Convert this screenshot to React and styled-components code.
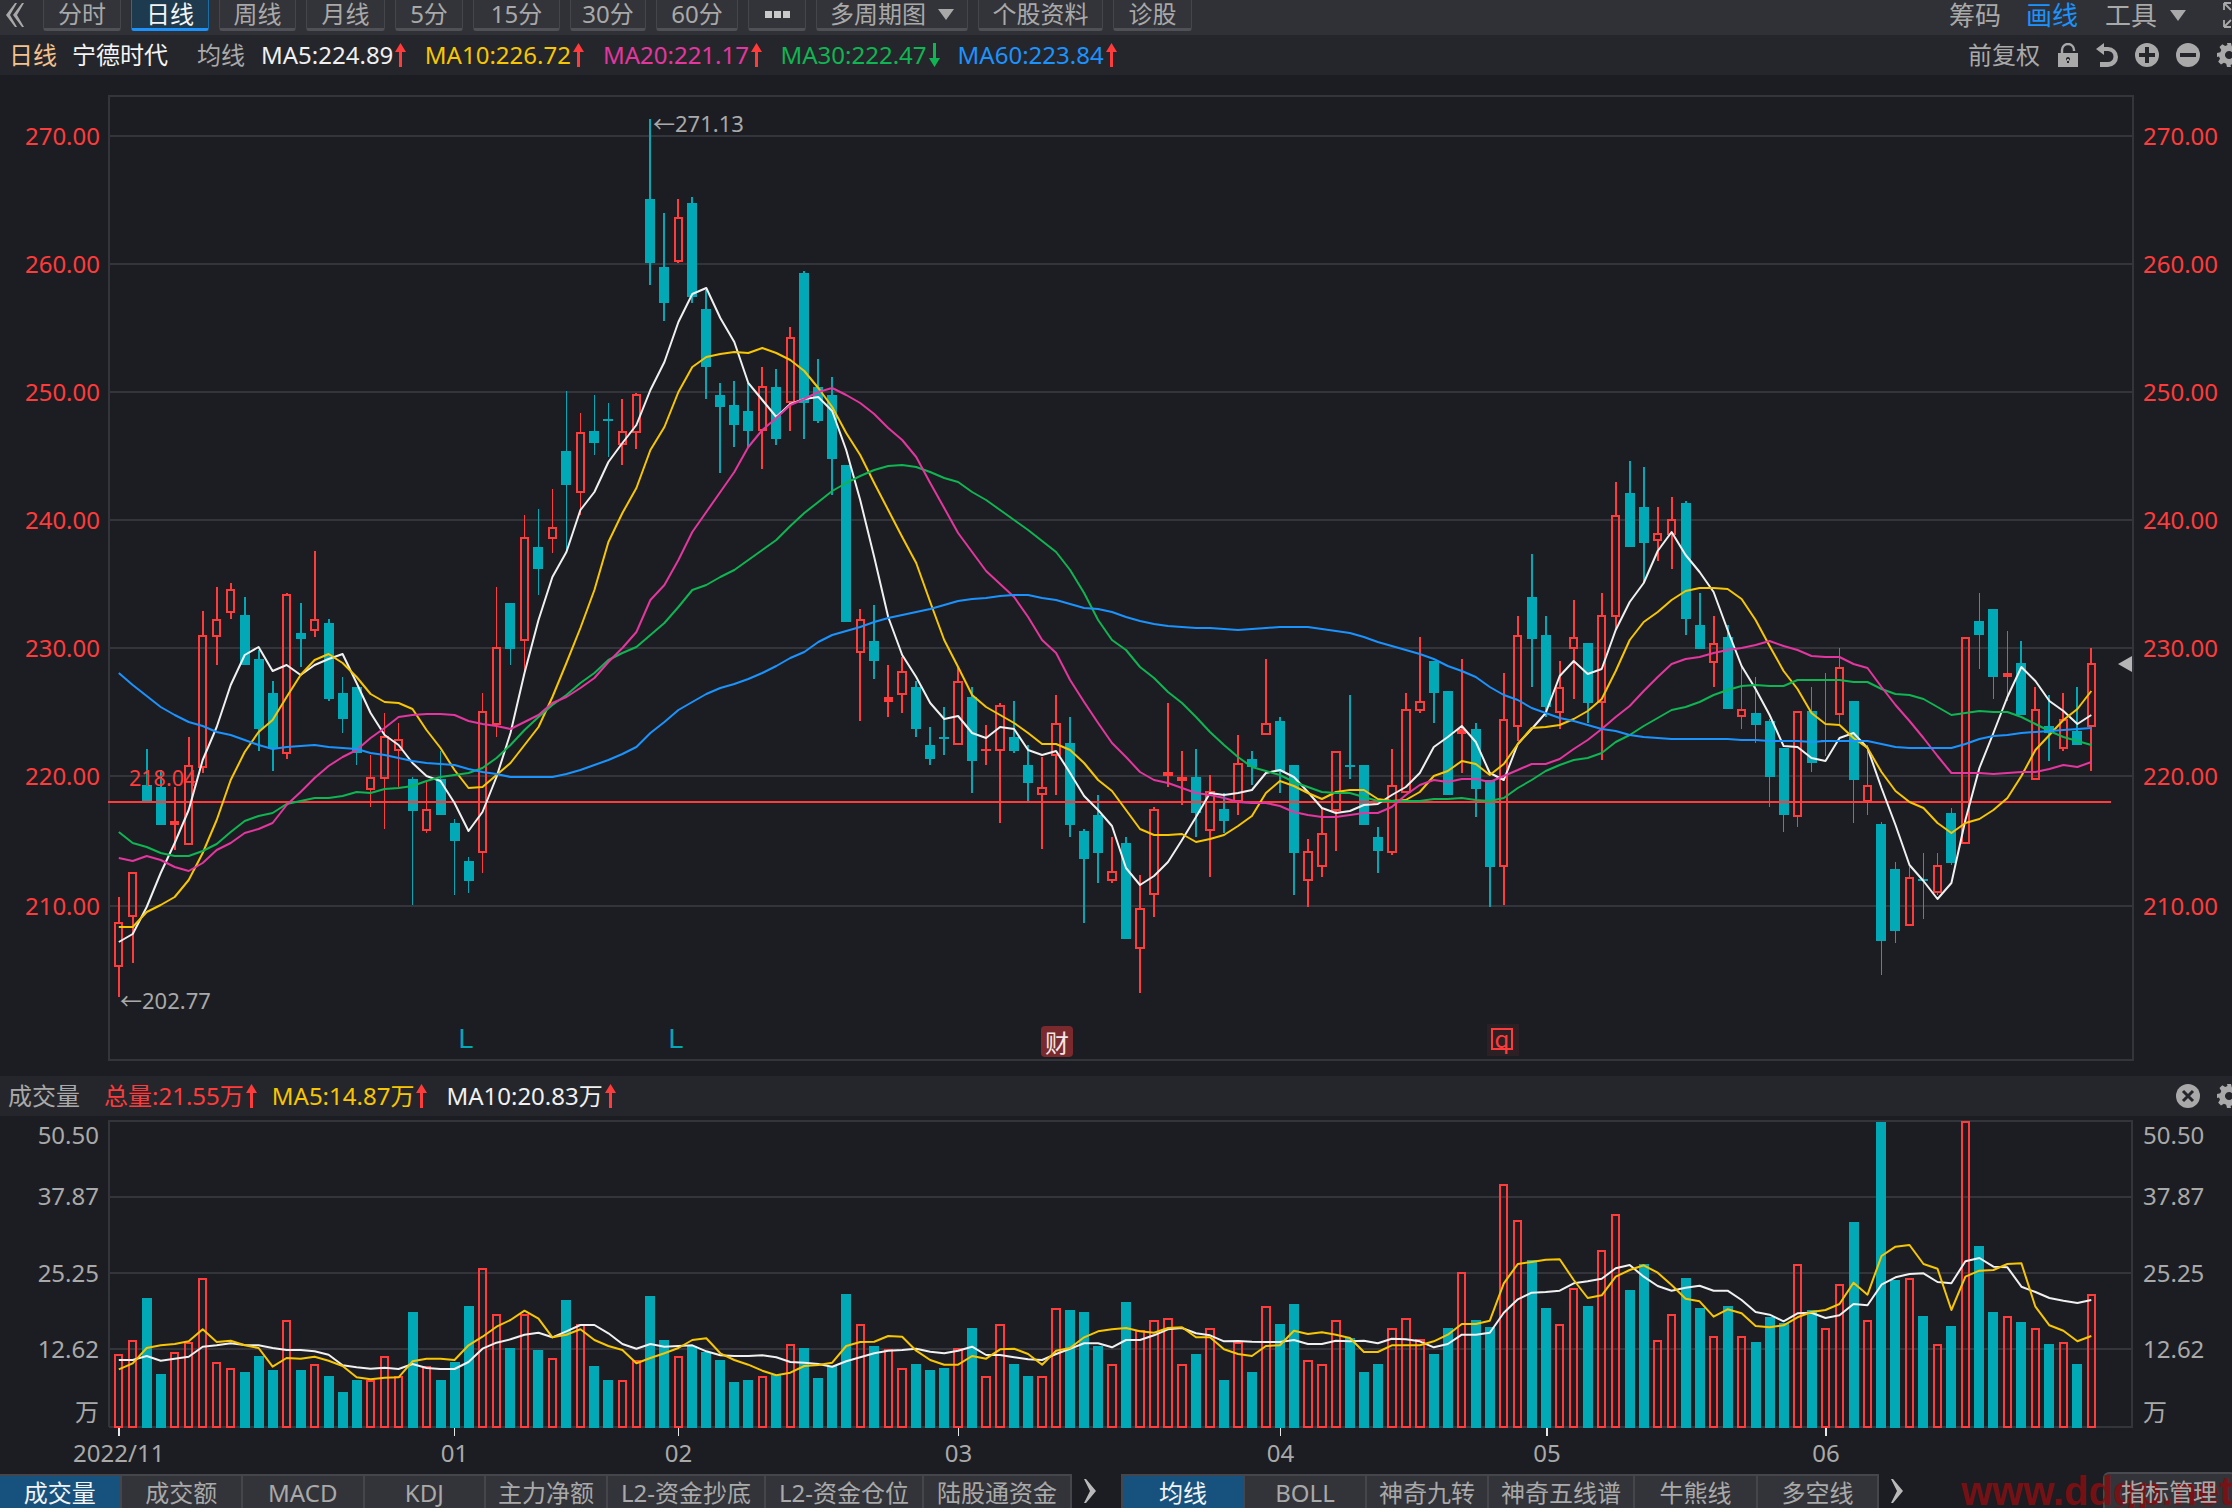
import React, { useMemo } from 'react';
import styled, { createGlobalStyle } from 'styled-components';

const RED = '#ff3b3b';
const TEAL = '#00a9b5';
const YELLOW = '#f7c600';
const PINK = '#e3369f';
const GREEN = '#0fb552';
const BLUE = '#1b93ff';
const WHITE = '#f0f0f0';
const GRAY = '#a9a9a9';
const GRID = '#34353a';

const X0 = 118.75;
const STEP = 13.99;
const xAt = (i) => X0 + STEP * i;

// u = red hollow, d = teal solid: [kind, high, bodyTop, bodyBottom, low] in page pixels
const CANDLES = [
  ['u', 897, 923, 966, 997], ['u', 873, 873, 916, 963], ['d', 749, 785, 801, 801], ['d', 770, 787, 825, 825],
  ['u', 787, 821, 825, 850], ['u', 737, 766, 844, 844], ['u', 611, 636, 767, 773], ['u', 587, 620, 636, 665],
  ['u', 583, 590, 612, 619], ['d', 597, 615, 665, 665], ['d', 650, 659, 729, 751], ['d', 681, 693, 749, 771],
  ['u', 593, 595, 753, 759], ['d', 603, 633, 639, 667], ['u', 551, 620, 630, 637], ['d', 619, 623, 699, 701],
  ['d', 677, 693, 719, 733], ['d', 687, 687, 753, 765], ['u', 755, 778, 789, 807], ['u', 713, 737, 778, 829],
  ['u', 723, 740, 750, 787], ['d', 777, 779, 811, 905], ['u', 780, 810, 830, 833], ['d', 751, 779, 815, 815],
  ['d', 819, 823, 841, 895], ['d', 857, 861, 881, 893], ['u', 693, 712, 852, 873], ['u', 587, 648, 724, 737],
  ['d', 603, 603, 649, 665], ['u', 515, 538, 640, 671], ['d', 509, 547, 569, 595], ['u', 489, 528, 538, 553],
  ['d', 391, 451, 485, 550], ['u', 413, 433, 492, 515], ['d', 395, 431, 443, 455], ['d', 403, 419, 421, 457],
  ['u', 399, 432, 444, 465], ['u', 393, 395, 432, 449], ['d', 119, 199, 263, 285], ['d', 213, 267, 303, 321],
  ['u', 199, 218, 261, 263], ['d', 197, 203, 297, 303], ['d', 290, 309, 367, 399], ['d', 383, 395, 407, 473],
  ['d', 381, 405, 425, 447], ['d', 383, 411, 431, 447], ['u', 367, 387, 430, 469], ['d', 369, 387, 439, 445],
  ['u', 327, 338, 402, 431], ['d', 271, 273, 403, 439], ['d', 359, 387, 421, 423], ['d', 377, 395, 459, 495],
  ['d', 465, 465, 622, 622], ['u', 609, 620, 652, 721], ['d', 605, 641, 661, 679], ['u', 665, 697, 702, 717],
  ['u', 657, 672, 694, 713], ['d', 681, 687, 729, 737], ['d', 727, 745, 759, 765], ['d', 707, 737, 739, 755],
  ['u', 667, 682, 744, 744], ['d', 687, 697, 761, 793], ['u', 725, 749, 751, 765], ['u', 703, 706, 750, 823],
  ['d', 701, 737, 751, 753], ['d', 745, 765, 783, 801], ['u', 757, 788, 794, 849], ['u', 695, 724, 755, 795],
  ['d', 717, 743, 825, 837], ['d', 829, 831, 859, 923], ['d', 795, 815, 853, 883], ['u', 837, 872, 880, 883],
  ['d', 837, 843, 939, 939], ['u', 875, 909, 948, 993], ['u', 807, 810, 894, 917], ['u', 703, 772, 776, 787],
  ['u', 751, 777, 781, 805], ['d', 749, 777, 813, 837], ['u', 775, 792, 830, 877], ['d', 793, 809, 821, 833],
  ['u', 735, 764, 801, 815], ['d', 751, 759, 767, 785], ['u', 659, 724, 734, 734], ['d', 717, 721, 772, 793],
  ['d', 765, 765, 853, 895], ['u', 839, 852, 880, 907], ['u', 809, 834, 866, 877], ['u', 752, 752, 810, 851],
  ['d', 695, 765, 767, 779], ['d', 765, 765, 825, 825], ['d', 827, 837, 851, 873], ['u', 749, 786, 852, 855],
  ['u', 693, 710, 792, 792], ['u', 637, 702, 710, 713], ['d', 661, 661, 693, 723], ['d', 691, 691, 795, 795],
  ['u', 659, 729, 734, 773], ['d', 723, 729, 789, 817], ['d', 780, 780, 867, 907], ['u', 673, 720, 866, 905],
  ['u', 616, 636, 726, 741], ['d', 554, 597, 639, 687], ['d', 616, 635, 707, 717], ['u', 661, 688, 712, 729],
  ['u', 600, 638, 648, 699], ['d', 643, 643, 703, 723], ['u', 593, 616, 702, 760], ['u', 482, 516, 616, 630],
  ['d', 461, 493, 547, 547], ['d', 467, 507, 543, 582], ['u', 507, 534, 540, 561], ['u', 497, 520, 534, 569],
  ['d', 501, 503, 619, 635], ['d', 593, 625, 649, 649], ['u', 616, 644, 662, 687], ['d', 625, 637, 709, 709],
  ['u', 665, 710, 716, 729], ['d', 677, 713, 725, 743], ['d', 719, 721, 777, 807], ['d', 748, 748, 815, 832],
  ['u', 712, 712, 816, 827], ['d', 687, 711, 763, 772], ['u', 673, 740, 741, 756], ['u', 648, 668, 714, 726],
  ['d', 701, 701, 780, 823], ['u', 745, 786, 801, 815], ['d', 822, 824, 941, 975], ['d', 862, 869, 931, 943],
  ['u', 867, 878, 925, 925], ['d', 853, 879, 881, 919], ['u', 853, 866, 892, 895], ['d', 808, 813, 863, 865],
  ['u', 638, 638, 843, 843], ['d', 593, 621, 635, 669], ['d', 609, 609, 677, 699], ['u', 631, 673, 677, 701],
  ['d', 641, 663, 715, 715], ['u', 687, 710, 779, 779], ['d', 695, 726, 733, 761], ['u', 693, 720, 748, 751],
  ['d', 687, 731, 745, 745], ['u', 648, 664, 726, 771],
];

const MA5 = [942, 934, 907, 873, 843, 810, 760, 727, 685, 655, 647, 671, 665, 675, 665, 659, 654, 683, 713, 735, 745, 763, 776, 781, 803, 831, 812, 777, 733, 673, 620, 577, 552, 510, 492, 462, 443, 425, 390, 362, 322, 294, 288, 318, 342, 383, 400, 417, 404, 399, 397, 411, 450, 500, 557, 617, 655, 677, 703, 719, 716, 733, 738, 727, 729, 750, 755, 751, 773, 796, 810, 826, 868, 885, 876, 862, 840, 817, 793, 795, 793, 790, 773, 770, 777, 792, 808, 813, 811, 805, 804, 795, 787, 773, 747, 737, 726, 742, 773, 780, 744, 729, 713, 676, 661, 674, 669, 630, 602, 583, 551, 532, 555, 572, 592, 630, 666, 689, 715, 746, 747, 758, 761, 738, 733, 748, 788, 825, 865, 881, 899, 883, 820, 768, 733, 697, 667, 681, 701, 711, 724, 715];
const MA10 = [927, 927, 912, 905, 897, 880, 853, 820, 780, 752, 732, 720, 697, 675, 660, 654, 663, 677, 694, 702, 703, 709, 730, 748, 770, 788, 787, 775, 763, 745, 727, 697, 663, 628, 590, 542, 513, 488, 450, 427, 392, 367, 357, 354, 352, 353, 348, 353, 360, 371, 388, 407, 433, 455, 483, 510, 537, 563, 602, 640, 667, 695, 707, 715, 723, 733, 744, 744, 750, 763, 780, 791, 810, 829, 835, 835, 834, 842, 839, 835, 826, 816, 793, 781, 786, 793, 799, 792, 790, 790, 799, 801, 800, 792, 776, 771, 761, 764, 775, 764, 744, 728, 727, 725, 719, 711, 699, 671, 640, 622, 612, 600, 591, 588, 588, 589, 599, 620, 646, 671, 689, 713, 724, 725, 738, 748, 772, 791, 802, 808, 823, 833, 823, 819, 810, 798, 776, 750, 735, 720, 709, 691];
const MA20 = [858, 861, 856, 860, 867, 871, 863, 850, 843, 833, 829, 823, 805, 792, 778, 766, 757, 750, 738, 728, 717, 715, 714, 714, 715, 721, 724, 726, 729, 722, 715, 703, 697, 688, 678, 662, 648, 632, 600, 585, 560, 532, 512, 492, 472, 447, 430, 418, 405, 399, 392, 388, 395, 403, 414, 428, 440, 457, 483, 508, 533, 552, 571, 584, 597, 617, 640, 653, 680, 702, 723, 743, 757, 772, 780, 783, 788, 793, 795, 798, 802, 803, 803, 806, 812, 815, 817, 817, 815, 813, 813, 807, 795, 785, 780, 782, 779, 779, 782, 776, 770, 764, 764, 759, 749, 740, 729, 717, 706, 691, 677, 664, 659, 657, 653, 650, 648, 645, 641, 646, 650, 656, 657, 657, 664, 668, 687, 705, 721, 738, 756, 773, 773, 773, 774, 773, 772, 772, 769, 765, 767, 762];
const MA30 = [832, 843, 847, 853, 856, 856, 851, 844, 832, 821, 816, 813, 804, 801, 798, 798, 796, 792, 793, 789, 788, 786, 781, 777, 775, 773, 768, 758, 745, 730, 717, 705, 695, 683, 673, 660, 653, 647, 635, 623, 607, 590, 585, 577, 570, 560, 550, 540, 526, 513, 502, 491, 483, 476, 470, 466, 465, 467, 472, 478, 482, 492, 500, 510, 520, 530, 541, 552, 570, 593, 620, 640, 650, 667, 678, 692, 703, 717, 732, 745, 757, 767, 771, 775, 782, 787, 792, 793, 793, 797, 801, 801, 801, 801, 799, 799, 798, 800, 801, 798, 788, 780, 771, 765, 760, 758, 753, 742, 735, 726, 718, 710, 707, 702, 695, 690, 686, 685, 686, 686, 680, 680, 680, 680, 682, 682, 689, 694, 695, 699, 707, 715, 713, 711, 712, 712, 717, 724, 731, 737, 741, 745];
const MA60 = [673, 685, 696, 707, 715, 722, 726, 732, 735, 740, 745, 749, 747, 746, 745, 747, 748, 749, 753, 755, 758, 761, 763, 764, 765, 769, 772, 774, 777, 777, 777, 777, 774, 770, 765, 760, 754, 747, 733, 722, 710, 702, 694, 688, 684, 679, 673, 666, 658, 652, 642, 635, 631, 627, 622, 618, 615, 612, 609, 605, 601, 599, 598, 596, 595, 595, 598, 600, 604, 608, 609, 612, 617, 621, 624, 626, 627, 628, 628, 629, 630, 629, 628, 627, 627, 627, 629, 631, 633, 637, 642, 646, 650, 654, 659, 666, 671, 677, 687, 695, 700, 708, 713, 718, 721, 725, 729, 731, 735, 737, 738, 739, 739, 739, 739, 739, 740, 740, 741, 741, 741, 742, 741, 741, 741, 741, 744, 747, 748, 748, 748, 748, 744, 739, 736, 735, 733, 732, 731, 730, 729, 728];

// bar tops, stored as offset*3 from y=1120
const VOL_TOPS = [704, 662, 534, 762, 698, 668, 476, 728, 746, 756, 708, 750, 602, 750, 734, 768, 816, 780, 782, 710, 770, 576, 740, 780, 726, 558, 446, 584, 684, 584, 690, 716, 540, 614, 738, 780, 782, 724, 528, 660, 710, 678, 696, 720, 786, 780, 770, 766, 674, 684, 774, 738, 522, 614, 678, 690, 746, 732, 750, 744, 686, 624, 770, 614, 732, 768, 770, 566, 570, 576, 678, 734, 546, 632, 602, 596, 734, 702, 626, 780, 668, 756, 560, 612, 552, 722, 734, 602, 654, 756, 732, 626, 596, 660, 702, 624, 458, 600, 620, 194, 302, 420, 564, 614, 506, 558, 392, 284, 510, 432, 662, 584, 474, 564, 650, 558, 650, 666, 590, 610, 434, 570, 626, 494, 306, 602, 6, 480, 476, 588, 674, 618, 0, 378, 576, 590, 606, 626, 672, 668, 732, 524];
const VOL_MA5 = [748, 730, 684, 676, 672, 664, 628, 666, 662, 676, 684, 740, 714, 716, 710, 722, 738, 772, 778, 773, 772, 724, 716, 716, 720, 676, 650, 620, 600, 572, 596, 652, 644, 628, 660, 678, 690, 730, 714, 700, 684, 660, 655, 700, 720, 734, 752, 766, 758, 738, 735, 728, 678, 666, 665, 648, 650, 692, 720, 734, 734, 708, 716, 688, 686, 702, 734, 692, 684, 652, 634, 628, 624, 634, 638, 624, 622, 652, 652, 688, 702, 708, 678, 676, 632, 642, 637, 644, 654, 696, 696, 676, 676, 676, 664, 644, 612, 612, 602, 490, 432, 426, 419, 418, 480, 534, 526, 470, 450, 436, 458, 495, 536, 544, 590, 568, 580, 618, 622, 616, 592, 576, 570, 552, 488, 524, 408, 380, 375, 432, 446, 570, 470, 452, 450, 432, 430, 560, 616, 632, 664, 648];
const VOL_MA10 = [720, 720, 708, 722, 716, 710, 680, 676, 670, 675, 676, 684, 690, 690, 694, 704, 736, 742, 746, 743, 747, 732, 744, 747, 747, 726, 686, 668, 658, 644, 638, 652, 634, 615, 615, 640, 672, 686, 672, 680, 678, 676, 694, 706, 708, 708, 706, 712, 726, 728, 732, 740, 724, 712, 700, 692, 690, 686, 695, 700, 692, 680, 705, 705, 712, 718, 720, 702, 686, 670, 670, 682, 660, 660, 646, 628, 624, 640, 646, 664, 663, 665, 666, 666, 660, 672, 672, 662, 664, 662, 670, 656, 658, 664, 682, 672, 644, 644, 638, 578, 538, 518, 516, 512, 490, 484, 476, 445, 435, 470, 498, 512, 503, 497, 512, 512, 540, 576, 584, 604, 580, 578, 594, 586, 552, 556, 494, 472, 462, 460, 486, 490, 424, 414, 440, 442, 500, 516, 534, 542, 549, 540];

const PRICE_GRID = [
  ['270.00', 135.7], ['260.00', 263.7], ['250.00', 391.7], ['240.00', 519.7],
  ['230.00', 647.7], ['220.00', 775.7], ['210.00', 905.7],
];
const VOL_GRID = [
  ['37.87', 1196.7], ['25.25', 1272.7], ['12.62', 1348.7],
];
const VOL_LABELS = [
  ['50.50', 1134.5], ['37.87', 1195.5], ['25.25', 1272.5], ['12.62', 1348.5], ['万', 1411.5],
];
const X_TICKS = [
  ['2022/11', 118.75], ['01', 454.5], ['02', 678.5], ['03', 958.5],
  ['04', 1280.5], ['05', 1547], ['06', 1826],
];

const PERIODS = [
  { label: '分时', w: 78 }, { label: '日线', w: 78, active: true }, { label: '周线', w: 77 }, { label: '月线', w: 79 },
  { label: '5分', w: 68 }, { label: '15分', w: 87 }, { label: '30分', w: 76 }, { label: '60分', w: 82 },
];

const INDICATORS = [
  { label: '成交量', w: 121.5, active: true }, { label: '成交额', w: 121.5 }, { label: 'MACD', w: 121.5 },
  { label: 'KDJ', w: 121.5 }, { label: '主力净额', w: 122 }, { label: 'L2-资金抄底', w: 158 },
  { label: 'L2-资金仓位', w: 158 }, { label: '陆股通资金', w: 148 },
];
const OVERLAYS = [
  { label: '均线', w: 122, active: true }, { label: 'BOLL', w: 122 }, { label: '神奇九转', w: 122 },
  { label: '神奇五线谱', w: 146 }, { label: '牛熊线', w: 123 }, { label: '多空线', w: 121 },
];

const GlobalStyle = createGlobalStyle`
  html, body {
    margin: 0;
    padding: 0;
    background: #1c1d22;
  }
  body {
    font-family: "Noto Sans", "Noto Sans CJK SC", sans-serif;
  }
`;

const Page = styled.div`
  position: relative;
  width: 2232px;
  height: 1508px;
  overflow: hidden;
  display: flex;
  flex-direction: column;
  background: #1c1d22;
  color: ${GRAY};
  font-size: 24px;
  line-height: 1;
`;

const Toolbar = styled.div`
  height: 35px;
  flex: none;
  display: flex;
  align-items: flex-start;
  gap: 10px;
  background: #303136;
  padding-left: 6px;
`;

const BackMark = styled.span`
  width: 27px;
  height: 30px;
  display: flex;
  align-items: center;
  color: ${GRAY};
`;

const ToolButton = styled.div`
  width: ${({ $w }) => $w}px;
  height: 31px;
  box-sizing: border-box;
  flex: none;
  display: flex;
  align-items: center;
  justify-content: center;
  gap: 12px;
  border: 1px solid ${({ $active }) => ($active ? '#1c6ea8' : '#45464c')};
  border-top: 0;
  border-bottom: ${({ $active }) => ($active ? '3px solid #1b93ff' : '3px solid #505156')};
  border-radius: 0 0 3px 3px;
  background: ${({ $active }) => ($active ? '#1d3a4f' : '#33343a')};
  color: ${({ $active }) => ($active ? '#f4f4f4' : GRAY)};
`;

const Caret = styled.i`
  width: 0;
  height: 0;
  border-left: 8px solid transparent;
  border-right: 8px solid transparent;
  border-top: 11px solid ${GRAY};
`;

const ToolLinks = styled.div`
  margin-left: auto;
  margin-right: -10px;
  height: 30px;
  display: flex;
  align-items: center;
  font-size: 26px;
`;

const ToolLink = styled.span`
  color: ${({ $active }) => ($active ? BLUE : GRAY)};
  margin-right: ${({ $mr }) => $mr}px;
`;

const LegendBar = styled.div`
  height: 40px;
  flex: none;
  display: flex;
  align-items: center;
  background: #25262b;
  padding-left: ${({ $pl }) => $pl}px;
`;

const LegendName = styled.span`
  color: ${({ $color }) => $color};
  margin-right: ${({ $mr }) => $mr}px;
  white-space: nowrap;
`;

const Readout = styled.span`
  display: flex;
  align-items: center;
  gap: 2px;
  color: ${({ $color }) => $color};
  margin-right: ${({ $mr }) => $mr ?? 18}px;
  white-space: nowrap;
`;

const LegendTools = styled.div`
  margin-left: auto;
  display: flex;
  align-items: center;
  gap: 17px;
  margin-right: -9px;
  flex: none;
`;

const PlainLabel = styled.span`
  color: ${GRAY};
  margin-right: 1px;
`;

const ChartSvg = styled.svg`
  display: block;
  flex: none;
  width: 2232px;
  height: ${({ $h }) => $h}px;
`;

const AxisText = styled.text`
  font-family: "Noto Sans", "Noto Sans CJK SC", sans-serif;
  font-size: ${({ $size }) => $size || 24}px;
  fill: ${({ $color }) => $color || GRAY};
  dominant-baseline: central;
`;

const SignalText = styled.text`
  font-family: "Liberation Sans", "Noto Sans", sans-serif;
  font-size: 27px;
  fill: ${TEAL};
  dominant-baseline: central;
  text-anchor: middle;
`;

const BadgeText = styled.text`
  font-family: "Noto Sans CJK SC", sans-serif;
  font-size: 24px;
  fill: ${({ $color }) => $color};
  dominant-baseline: central;
  text-anchor: middle;
`;

const TabRow = styled.div`
  position: relative;
  height: 34px;
  flex: none;
  display: flex;
  align-items: stretch;
`;

const TabGroup = styled.div`
  display: flex;
  border-top: 2px solid #45464c;
  border-left: ${({ $edge }) => ($edge ? '2px solid #45464c' : '0')};
  margin-left: ${({ $ml }) => $ml || 0}px;
  background: #33343a;
`;

const Tab = styled.div`
  width: ${({ $w }) => $w}px;
  box-sizing: border-box;
  padding-top: 2px;
  display: flex;
  align-items: center;
  justify-content: center;
  border-right: 2px solid #45464c;
  white-space: nowrap;
  background: ${({ $active }) => ($active ? '#17527f' : 'transparent')};
  color: ${({ $active }) => ($active ? '#f2f2f2' : GRAY)};
`;

const Chevron = styled.svg`
  width: 14px;
  height: 24px;
  align-self: center;
  flex: none;
  margin-left: ${({ $ml }) => $ml}px;
`;

const ManageButton = styled.div`
  position: absolute;
  right: -4px;
  bottom: 0;
  width: 133px;
  height: 36px;
  box-sizing: border-box;
  border: 2px solid #4a4b51;
  border-bottom: 0;
  border-radius: 6px 6px 0 0;
  background: #33343a;
`;

const ManageLabel = styled.span`
  position: absolute;
  left: 2121px;
  top: 6px;
  z-index: 3;
  color: ${GRAY};
  white-space: nowrap;
`;

const Watermark = styled.span`
  position: absolute;
  left: 1961px;
  top: -6px;
  z-index: 2;
  font-family: "Liberation Sans", sans-serif;
  font-size: 40px;
  font-weight: 700;
  line-height: 46px;
  color: #7d1113;
  opacity: 0.92;
  white-space: nowrap;
`;

function Arrow({ color, down }) {
  return (
    <svg width="11" height="24" viewBox="0 0 11 24">
      <path d={down ? 'M4 0h3v15h4l-5.500 9L0 15h4z' : 'M5.500 0L11 9H7v15H4V9H0z'} fill={color} />
    </svg>
  );
}

function LockIcon() {
  return (
    <svg width="20" height="24" viewBox="0 0 20 24">
      <path d="M4 11V7a6 6 0 0 1 12 0v1" fill="none" stroke={GRAY} strokeWidth="2.400" />
      <path d="M0 10h20v14H0z M10 14a2 2 0 1 0 .01 0z M9 16h2v4H9z" fill={GRAY} fillRule="evenodd" />
    </svg>
  );
}

function UndoIcon() {
  return (
    <svg width="23" height="24" viewBox="0 0 23 24">
      <path d="M9 0L1 6l8 6V8h4a5 5 0 0 1 0 11H5v5h8a10 10 0 0 0 0-20H9z" fill={GRAY} />
    </svg>
  );
}

function ZoomIcon({ plus }) {
  return (
    <svg width="24" height="24" viewBox="0 0 24 24">
      <circle cx="12" cy="12" r="12" fill={GRAY} />
      <path d={plus ? 'M10 4h4v6h6v4h-6v6h-4v-6H4v-4h6z' : 'M4 10h16v4H4z'} fill="#25262b" />
    </svg>
  );
}

function GearIcon() {
  return (
    <svg width="24" height="24" viewBox="0 0 24 24">
      <path
        d="M10 0h4l.8 3.300 2.300 1 2.900-1.800 2.800 2.800-1.800 2.900 1 2.300L24 10v4l-3.300.8-1 2.300 1.800 2.900-2.800 2.800-2.900-1.800-2.300 1L14 24h-4l-.8-3.300-2.300-1-2.900 1.800-2.800-2.800 1.800-2.900-1-2.300L0 14v-4l3.300-.8 1-2.300L2.500 4l2.800-2.800 2.900 1.800 2.300-1zM12 8a4 4 0 1 0 .01 0z"
        fill={GRAY}
        fillRule="evenodd"
      />
    </svg>
  );
}

function CloseIcon() {
  return (
    <svg width="24" height="24" viewBox="0 0 24 24">
      <circle cx="12" cy="12" r="12" fill={GRAY} />
      <path d="M7 7l10 10M17 7L7 17" stroke="#25262b" strokeWidth="3" />
    </svg>
  );
}

function ExpandIcon() {
  return (
    <svg width="20" height="28" viewBox="0 0 20 28">
      <path d="M2 2h7M2 2v7M2 2l7 7M2 26h7M2 26v-7M2 26l7-7" fill="none" stroke={GRAY} strokeWidth="1.800" />
    </svg>
  );
}

function DotsIcon() {
  return (
    <svg width="25" height="7" viewBox="0 0 25 7">
      <path d="M0 0h7v7H0zM9 0h7v7H9zM18 0h7v7h-7z" fill="#c9c9c9" />
    </svg>
  );
}

function ChevronRight() {
  return <path d="M2 0l10 12L2 24h-2l6-12L0 0z" fill="#b9b9b9" />;
}

function Candle({ data, i }) {
  const [kind, high, top, bottom, low] = data;
  const x = xAt(i);
  const solidRed = kind === 'u' && bottom - top <= 5;
  if (kind === 'd') {
    return (
      <g fill={TEAL}>
        <rect x={x - 0.9} y={high} width="1.800" height={low - high} />
        <rect x={x - 5} y={top} width="10" height={Math.max(bottom - top, 2)} />
      </g>
    );
  }
  return (
    <g>
      <rect x={x - 0.9} y={high} width="1.800" height={top - high} fill={RED} />
      <rect x={x - 0.9} y={bottom} width="1.800" height={low - bottom} fill={RED} />
      {solidRed ? (
        <rect x={x - 4.7} y={top} width="9.400" height={bottom - top} fill={RED} />
      ) : (
        <rect x={x - 3.7} y={top} width="7.400" height={bottom - top} fill="none" stroke={RED} strokeWidth="2" />
      )}
    </g>
  );
}

function MaLine({ values, color, width = 2 }) {
  const points = values.map((y, i) => `${xAt(i).toFixed(1)},${y}`).join(' ');
  return <polyline points={points} fill="none" stroke={color} strokeWidth={width} strokeLinejoin="round" />;
}

function PriceChart() {
  return (
    <ChartSvg $h={1001} viewBox="0 75 2232 1001">
      <g shapeRendering="crispEdges">
        <rect x="109" y="96" width="2024" height="964" fill="none" stroke={GRID} strokeWidth="2" />
        {PRICE_GRID.map(([label, y]) => (
          <rect key={label} x="109" y={y - 1} width="2024" height="2" fill={GRID} />
        ))}
      </g>
      {PRICE_GRID.map(([label, y]) => (
        <g key={label}>
          <AxisText x="100" y={y} $color={RED} textAnchor="end">{label}</AxisText>
          <AxisText x="2143" y={y} $color={RED}>{label}</AxisText>
        </g>
      ))}
      <g shapeRendering="crispEdges">
        {CANDLES.map((c, i) => (
          <Candle key={i} data={c} i={i} />
        ))}
        <rect x="108" y="801" width="2003" height="1.600" fill={RED} />
      </g>
      <MaLine values={MA5} color={WHITE} />
      <MaLine values={MA10} color={YELLOW} />
      <MaLine values={MA30} color={GREEN} />
      <MaLine values={MA20} color={PINK} />
      <MaLine values={MA60} color={BLUE} />

      <AxisText x="129" y="777" $size={21.500} $color={RED}>218.04</AxisText>
      <AxisText x="653" y="123" $size={22}>←271.13</AxisText>
      <AxisText x="120" y="1000" $size={22}>←202.77</AxisText>
      <path d="M2132 656v16l-14-8z" fill="#b5b5b5" />

      <SignalText x="466" y="1039">L</SignalText>
      <SignalText x="676" y="1039">L</SignalText>

      <rect x="1041" y="1026" width="32" height="31" rx="4" fill="#7a2a2c" />
      <BadgeText x="1057" y="1041" $color="#f3e6e6">财</BadgeText>

      <rect x="1487" y="1024" width="32" height="32" fill="#2c2024" />
      <rect x="1492" y="1029" width="20" height="20" fill="none" stroke={RED} strokeWidth="2" />
      <BadgeText x="1502" y="1037" $color={RED}>q</BadgeText>
    </ChartSvg>
  );
}

function VolumeChart() {
  const bars = useMemo(
    () =>
      CANDLES.map((c, i) => ({
        up: c[0] === 'u',
        x: xAt(i),
        top: Math.max(1120 + VOL_TOPS[i] / 3, 1122),
      })),
    [],
  );
  const toY = (values) => values.map((v) => +(1120 + v / 3).toFixed(1));

  return (
    <ChartSvg $h={358} viewBox="0 1116 2232 358">
      <g shapeRendering="crispEdges">
        <path d="M109 1427V1121H2132V1427H109" fill="none" stroke={GRID} strokeWidth="2" />
        {VOL_GRID.map(([label, y]) => (
          <rect key={label} x="109" y={y - 1} width="2023" height="2" fill={GRID} />
        ))}
      </g>
      {VOL_LABELS.map(([label, y]) => (
        <g key={label}>
          <AxisText x="99" y={y} textAnchor="end">{label}</AxisText>
          <AxisText x="2143" y={y}>{label}</AxisText>
        </g>
      ))}
      <g shapeRendering="crispEdges">
        {bars.map((b, i) =>
          b.up ? (
            <rect key={i} x={b.x - 3.7} y={b.top} width="7.400" height={1427 - b.top} fill="none" stroke={RED} strokeWidth="2" />
          ) : (
            <rect key={i} x={b.x - 5} y={b.top} width="10" height={1428 - b.top} fill={TEAL} />
          ),
        )}
      </g>
      <MaLine values={toY(VOL_MA10)} color={WHITE} />
      <MaLine values={toY(VOL_MA5)} color={YELLOW} />
      {X_TICKS.map(([label, x]) => (
        <g key={label}>
          <rect x={x - 0.8} y="1428" width="1.600" height="8" fill="#e6e6e6" shapeRendering="crispEdges" />
          <AxisText x={x} y="1452" textAnchor="middle">{label}</AxisText>
        </g>
      ))}
    </ChartSvg>
  );
}

export default function App() {
  return (
    <Page>
      <GlobalStyle />
      <Toolbar>
        <BackMark>
          <svg width="18" height="24" viewBox="0 0 18 24">
            <path d="M9 0h2L4 12l7 12H9L0 12zM16 0h2l-7 12 7 12h-2L7 12z" fill={GRAY} />
          </svg>
        </BackMark>
        {PERIODS.map((p) => (
          <ToolButton key={p.label} $w={p.w} $active={p.active}>{p.label}</ToolButton>
        ))}
        <ToolButton $w={58}><DotsIcon /></ToolButton>
        <ToolButton $w={152}>多周期图<Caret /></ToolButton>
        <ToolButton $w={125}>个股资料</ToolButton>
        <ToolButton $w={79}>诊股</ToolButton>
        <ToolLinks>
          <ToolLink $mr={25}>筹码</ToolLink>
          <ToolLink $mr={27} $active>画线</ToolLink>
          <ToolLink $mr={13}>工具</ToolLink>
          <Caret />
          <ToolLink $mr={36} />
          <ExpandIcon />
        </ToolLinks>
      </Toolbar>

      <LegendBar $pl={9}>
        <LegendName $color="#f5c28e" $mr={15}>日线</LegendName>
        <LegendName $color="#f4f4f4" $mr={29}>宁德时代</LegendName>
        <LegendName $color={GRAY} $mr={16}>均线</LegendName>
        <Readout $color={WHITE} $mr={18.500}>MA5:224.89<Arrow color={RED} /></Readout>
        <Readout $color={YELLOW} $mr={19}>MA10:226.72<Arrow color={RED} /></Readout>
        <Readout $color={PINK} $mr={18.500}>MA20:221.17<Arrow color={RED} /></Readout>
        <Readout $color={GREEN}>MA30:222.47<Arrow color={GREEN} down /></Readout>
        <Readout $color={BLUE}>MA60:223.84<Arrow color={RED} /></Readout>
        <LegendTools>
          <PlainLabel>前复权</PlainLabel>
          <LockIcon />
          <UndoIcon />
          <ZoomIcon plus />
          <ZoomIcon />
          <GearIcon />
        </LegendTools>
      </LegendBar>

      <PriceChart />

      <LegendBar $pl={8}>
        <LegendName $color={GRAY} $mr={24}>成交量</LegendName>
        <Readout $color={RED} $mr={15}>总量:21.55万<Arrow color={RED} /></Readout>
        <Readout $color={YELLOW} $mr={19}>MA5:14.87万<Arrow color={RED} /></Readout>
        <Readout $color={WHITE}>MA10:20.83万<Arrow color={RED} /></Readout>
        <LegendTools>
          <CloseIcon />
          <GearIcon />
        </LegendTools>
      </LegendBar>

      <VolumeChart />

      <TabRow>
        <TabGroup>
          {INDICATORS.map((t) => (
            <Tab key={t.label} $w={t.w} $active={t.active}>{t.label}</Tab>
          ))}
        </TabGroup>
        <Chevron $ml={12} viewBox="0 0 14 24"><ChevronRight /></Chevron>
        <TabGroup $edge $ml={23}>
          {OVERLAYS.map((t) => (
            <Tab key={t.label} $w={t.w} $active={t.active}>{t.label}</Tab>
          ))}
        </TabGroup>
        <Chevron $ml={12} viewBox="0 0 14 24"><ChevronRight /></Chevron>
        <ManageButton />
        <Watermark>www.ddgp.net</Watermark>
        <ManageLabel>指标管理</ManageLabel>
      </TabRow>
    </Page>
  );
}
